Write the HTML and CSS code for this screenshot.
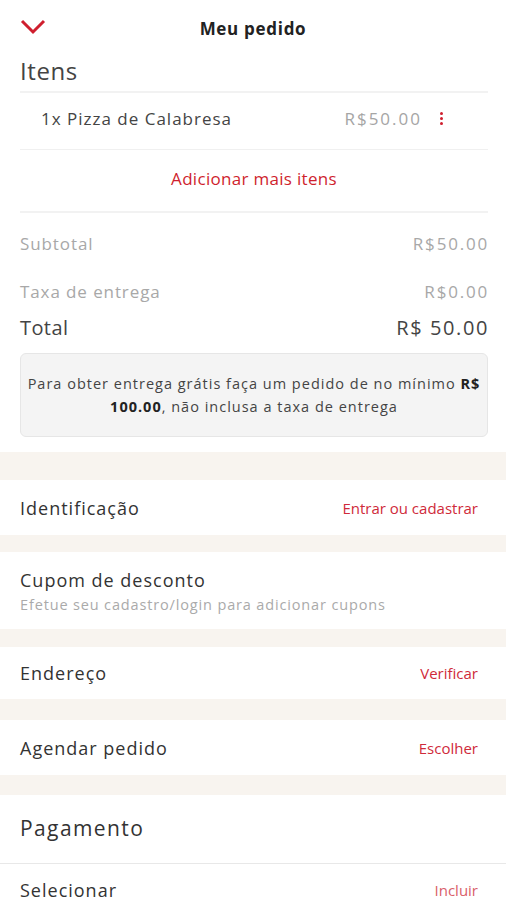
FILE: index.html
```html
<!DOCTYPE html>
<html lang="pt-BR">
<head>
<meta charset="utf-8">
<title>Meu pedido</title>
<link rel="stylesheet" href="styles.css">
</head>
<body>
<div class="page">
    <div class="top_bar">
        <span class="back">
            <svg width="26" height="16" viewBox="0 0 26 16"><path d="M2 2 L13 13 L24 2" fill="none" stroke="#cf1f2e" stroke-width="3"/></svg>
        </span>
        <h1>Meu pedido</h1>
    </div>

    <div class="order">
        <h2>Itens</h2>
        <div class="item_row">
            <span class="item_name">1x Pizza de Calabresa</span>
            <span class="item_price">R$50.00</span>
            <span class="item_more"><i></i><i></i><i></i></span>
        </div>
        <div class="add_more">Adicionar mais itens</div>

        <div class="sum_row sub first"><span>Subtotal</span><span class="val">R$50.00</span></div>
        <div class="sum_row sub"><span>Taxa de entrega</span><span class="val">R$0.00</span></div>
        <div class="sum_row total"><span>Total</span><span class="val">R$ 50.00</span></div>

        <div class="notice">Para obter entrega grátis faça um pedido de no mínimo <b>R$ 100.00</b>, não inclusa a taxa de entrega</div>
    </div>

    <div class="gap g1"></div>
    <div class="block_row r1"><span class="label">Identificação</span><span class="action">Entrar ou cadastrar</span></div>
    <div class="gap g2"></div>
    <div class="block_row coupon">
        <span class="label">Cupom de desconto</span>
        <span class="hint">Efetue seu cadastro/login para adicionar cupons</span>
    </div>
    <div class="gap g3"></div>
    <div class="block_row r2"><span class="label">Endereço</span><span class="action">Verificar</span></div>
    <div class="gap g4"></div>
    <div class="block_row r3"><span class="label">Agendar pedido</span><span class="action">Escolher</span></div>
    <div class="gap g5"></div>
    <div class="pay_head">Pagamento</div>
    <div class="block_row r4"><span class="label">Selecionar</span><span class="action">Incluir</span></div>
</div>
</body>
</html>
```

FILE: styles.css
```css
body {
	margin:0;
	background:#fff;
	font-family:"Open Sans", "Liberation Sans", sans-serif;
	color:#333;
}
.page { width:506px; }

.top_bar {
	position:relative;
	height:56px;
	display:flex;
	align-items:center;
	justify-content:center;
}
.top_bar h1 {
	margin:0;
	font-size:17px;
	font-weight:700;
	color:#222;
	letter-spacing:0.7px;
}
.back {
	position:absolute;
	left:20px;
	top:18px;
}

.order { padding:0 18px 0 20px; }
.order h2 {
	margin:0;
	font-size:24px;
	font-weight:400;
	color:#444;
	line-height:30px;
	letter-spacing:0.6px;
	padding-bottom:5px;
	border-bottom:2px solid #f2f2f2;
}
.item_row {
	display:flex;
	align-items:center;
	height:56px;
	padding:0 0 0 21px;
	border-bottom:1px solid #f0f0f0;
	font-size:17px;
	letter-spacing:1px;
}
.item_row span { margin-top:-6px; }
.item_name { flex:1; color:#444; }
.item_price { color:#a5a5a5; letter-spacing:2px; }
.item_more {
	width:48px;
	margin-left:18px;
	display:flex;
	flex-direction:column;
	align-items:flex-start;
	gap:2px;
}
.item_more i {
	width:3px;
	height:3px;
	background:#cf1f2e;
	border-radius:50%;
}
.add_more {
	height:61px;
	line-height:58px;
	text-align:center;
	color:#cf1f2e;
	font-size:17px;
	letter-spacing:0.3px;
	border-bottom:2px solid #f2f2f2;
}
.sum_row {
	display:flex;
	justify-content:space-between;
	align-items:center;
}
.sum_row.sub {
	height:48px;
	font-size:17px;
	color:#a8a8a8;
	letter-spacing:0.9px;
}
.sum_row.first { margin-top:6px; }
.sum_row .val { letter-spacing:1.8px; margin-right:-1px; }
.sum_row.total {
	height:24px;
	font-size:20px;
	color:#444;
	letter-spacing:0.4px;
}
.sum_row.total .val { letter-spacing:1.6px; }
.notice {
	margin:14px 0 15px;
	padding:18px 6px;
	background:#f4f4f4;
	border:1px solid #e6e6e6;
	border-radius:6px;
	text-align:center;
	font-size:14.5px;
	line-height:23px;
	letter-spacing:1px;
	color:#444;
}
.notice b { color:#222; }

.gap { background:#f8f4ef; }
.g1 { height:28px; }
.g2 { height:17px; }
.g3 { height:18px; }
.g4 { height:21px; }
.g5 { height:20px; }

.block_row {
	display:flex;
	justify-content:space-between;
	align-items:center;
	padding:0 28px 0 20px;
}
.block_row .label { font-size:18px; color:#333; letter-spacing:1px; }
.block_row .action { font-size:15px; color:#cf2a3a; }
.r1 { height:55px; }
.r2 { height:52px; }
.r3 { height:55px; }
.r4 { height:52px; }
.coupon {
	height:77px;
	flex-direction:column;
	align-items:flex-start;
	justify-content:center;
	gap:3px;
}
.coupon .hint { font-size:14.5px; color:#aaa; letter-spacing:0.85px; }

.pay_head {
	height:68px;
	line-height:66px;
	padding-left:20px;
	font-size:21px;
	color:#333;
	letter-spacing:1.4px;
	border-bottom:1px solid #e8e8e8;
}
.r4 .action { color:#d9606a; }
```
